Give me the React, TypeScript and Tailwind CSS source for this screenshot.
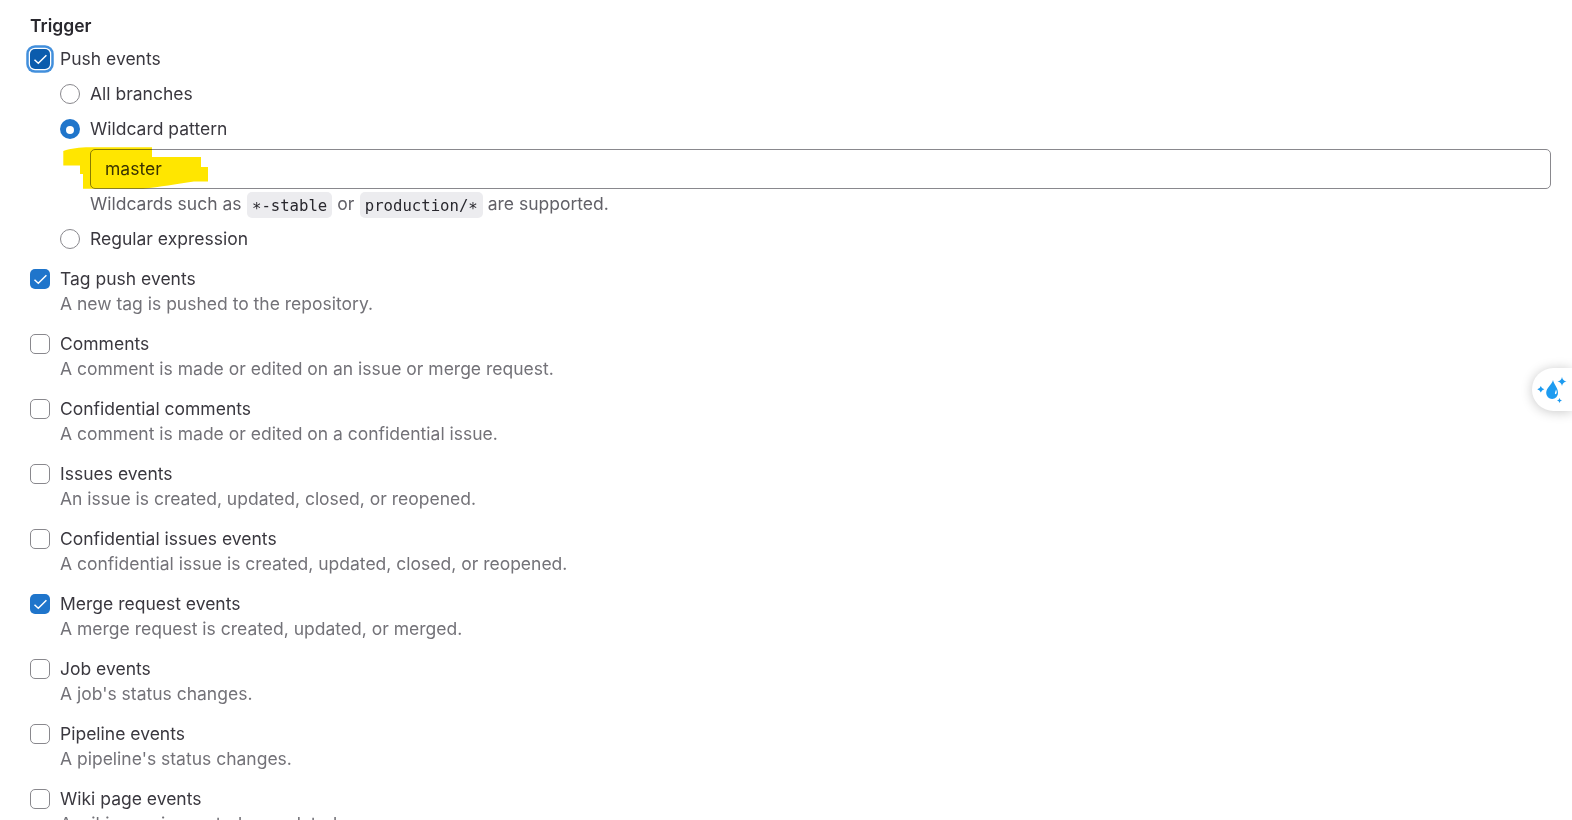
import { Fragment } from "react";

type Trigger = { label: string; help: string; checked?: boolean };

const triggers: Trigger[] = [
  { label: "Tag push events", help: "A new tag is pushed to the repository.", checked: true },
  { label: "Comments", help: "A comment is made or edited on an issue or merge request." },
  { label: "Confidential comments", help: "A comment is made or edited on a confidential issue." },
  { label: "Issues events", help: "An issue is created, updated, closed, or reopened." },
  { label: "Confidential issues events", help: "A confidential issue is created, updated, closed, or reopened." },
  { label: "Merge request events", help: "A merge request is created, updated, or merged.", checked: true },
  { label: "Job events", help: "A job's status changes." },
  { label: "Pipeline events", help: "A pipeline's status changes." },
  { label: "Wiki page events", help: "A wiki page is created or updated." },
];

function Checkbox({ checked, focused }: { checked?: boolean; focused?: boolean }) {
  if (!checked) {
    return <span className="size-5 shrink-0 rounded-[5px] border border-[#89888d] bg-white" />;
  }
  return (
    <span
      className={
        focused
          ? "flex size-5 shrink-0 rounded-[5px] bg-[#0b5cad] shadow-[0_0_0_1.25px_#fff,0_0_0_3.75px_#428fdc]"
          : "flex size-5 shrink-0 rounded-[5px] bg-[#1f75cb]"
      }
    >
      <svg viewBox="0 0 20 20" className="size-5" fill="none" stroke="#fff" strokeWidth="1.5">
        <path d="M4.500 10.700 8.300 14.200 16.400 6.300" />
      </svg>
    </span>
  );
}

function Radio({ label, checked }: { label: string; checked?: boolean }) {
  return (
    <div className="flex h-[25px] items-center gap-2.5">
      {checked ? (
        <span className="flex size-5 shrink-0 items-center justify-center rounded-full bg-[#1f75cb]">
          <span className="mt-[2px] size-2 rounded-full bg-white" />
        </span>
      ) : (
        <span className="size-5 shrink-0 rounded-full border border-[#89888d] bg-white" />
      )}
      <span>{label}</span>
    </div>
  );
}

function Code({ children }: { children: string }) {
  return (
    <code className="ml-[0.5px] rounded-[5px] bg-[#ececef] px-[5px] pt-[4px] pb-[3px] align-[-1px] font-['DejaVu_Sans_Mono',monospace] text-[15.65px] leading-none text-[#28272d]">
      {children.split("*").map((part, i) => (
        <Fragment key={i}>
          {i > 0 && <span className="relative top-[3px]">*</span>}
          {part}
        </Fragment>
      ))}
    </code>
  );
}

function Highlight() {
  return (
    <svg
      viewBox="0 0 150 46"
      className="pointer-events-none absolute -top-[4px] -left-[28px] h-[46px] w-[150px] mix-blend-multiply"
      fill="#ffe600"
    >
      <path d="M0.3 5C8 2.5 16 1.3 27 1.3H89V11H138V21H145V35.5H131C112 38 98 41 80 42.7H20V28H17V19.5H0.3Z" />
    </svg>
  );
}

function Assistant() {
  return (
    <div className="fixed top-[368px] right-0 h-[43px] w-10 rounded-l-full bg-white shadow-[0_1px_12px_rgba(0,0,0,0.22)]">
      <svg viewBox="0 0 40 43" className="h-[43px] w-10" fill="#1d9bf0">
        <path d="M21 12C22 17 26 19.500 26 25A5.900 5.900 0 0 1 14.200 25C14.200 19.500 20 17 21 12Z" />
        <path d="M24 21.500C25.300 24 24.900 26.300 23.200 26.200C22.300 25.500 23.600 23.500 24 21.500Z" fill="#fff" />
        <path d="M30 9Q30.700 12.800 34.500 13.500Q30.700 14.200 30 18Q29.300 14.200 25.500 13.500Q29.300 12.800 30 9Z" />
        <path d="M8.800 18Q9.500 20.600 12.300 21.300Q9.500 22 8.800 24.600Q8.100 22 5.300 21.300Q8.100 20.600 8.800 18Z" />
        <path d="M27.500 30Q27.900 32.100 30 32.500Q27.900 32.900 27.500 35Q27.100 32.900 25 32.500Q27.100 32.100 27.500 30Z" />
      </svg>
    </div>
  );
}

export default function App() {
  return (
    <main className="h-[820px] overflow-hidden bg-white pt-[13px] pr-[21px] pl-[30px] font-['Inter',sans-serif] text-[17.5px] leading-[25px] text-[#3a383f]">
      <h2 className="mb-2 font-semibold text-[#28272d]">Trigger</h2>
      <div className="flex h-[25px] items-center gap-2.5">
        <Checkbox checked focused />
        <span>Push events</span>
      </div>
      <div className="mt-2.5 flex flex-col pl-[30px]">
        <Radio label="All branches" />
        <div className="mt-2.5">
          <Radio label="Wildcard pattern" checked />
        </div>
        <div className="relative mt-[8px] ml-[30px] flex h-10 items-center rounded-[5px] border border-[#89888d] px-[14px] pb-[2px]">
          <span>master</span>
          <Highlight />
        </div>
        <p className="mt-[2px] mb-[10px] ml-[30px] h-[25px] whitespace-nowrap text-[#626168]">
          Wildcards such as <Code>*-stable</Code> or <Code>production/*</Code> are supported.
        </p>
        <Radio label="Regular expression" />
      </div>
      <div className="mt-[15px] flex flex-col gap-[15px]">
        {triggers.map((t) => (
          <div key={t.label} className="flex gap-2.5">
            <div className="flex h-[25px] items-center">
              <Checkbox checked={t.checked} />
            </div>
            <div>
              <div>{t.label}</div>
              <p className="text-[#737278]">{t.help}</p>
            </div>
          </div>
        ))}
      </div>
      <Assistant />
    </main>
  );
}
